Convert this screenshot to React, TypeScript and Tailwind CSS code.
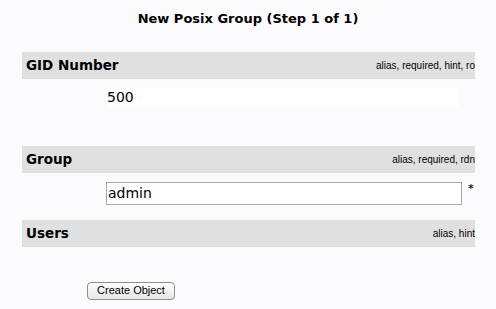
import React from 'react';

const verdana = { fontFamily: '"DejaVu Sans", Verdana, sans-serif' };

const SectionBar: React.FC<{ label: string; hint: string }> = ({ label, hint }) => (
  <div className="flex h-[27px] items-center justify-between overflow-hidden bg-[#e0e0e0] pl-[4px]">
    <span className="text-[13.5px] font-bold text-black" style={verdana}>
      {label}
    </span>
    <span className="whitespace-nowrap font-['Liberation_Sans',sans-serif] text-[10px] text-black">{hint}</span>
  </div>
);

export default function App() {
  return (
    <div className="h-[309px] w-[496px] overflow-hidden bg-[#fbfbfd]" style={verdana}>
      <h1 className="pt-[9px] text-center text-[13px] font-bold text-black">New Posix Group (Step 1 of 1)</h1>

      <div className="mx-[22px] mt-[23px] w-[453px]">
        {/* GID Number */}
        <SectionBar label="GID Number" hint="alias, required, hint, ro" />
        <div className="mt-[9px] ml-[84px] flex h-[19px] w-[352px] items-center bg-white pl-[1px] text-[14px] text-black">
          500
        </div>

        {/* Group */}
        <div className="mt-[39px]">
          <SectionBar label="Group" hint="alias, required, rdn" />
        </div>
        <div className="mt-[9px] flex items-start">
          <div className="ml-[84px] flex h-[23px] w-[356px] items-center border border-[#a9a9a9] bg-white pl-[1px] text-[14px] text-black">
            admin
          </div>
          <span className="ml-[6px] mt-[1px] text-[11px] font-bold leading-none text-[#222]">*</span>
        </div>

        {/* Users */}
        <div className="mt-[15px]">
          <SectionBar label="Users" hint="alias, hint" />
        </div>

        <div className="mt-[35px] ml-[65px]">
          <button className="flex h-[18px] w-[88px] items-center justify-center rounded-[4px] border border-[#8e8e8e] bg-gradient-to-b from-white to-[#e6e6e6] font-['Liberation_Sans',sans-serif] text-[11px] text-black">
            Create Object
          </button>
        </div>
      </div>
    </div>
  );
}
